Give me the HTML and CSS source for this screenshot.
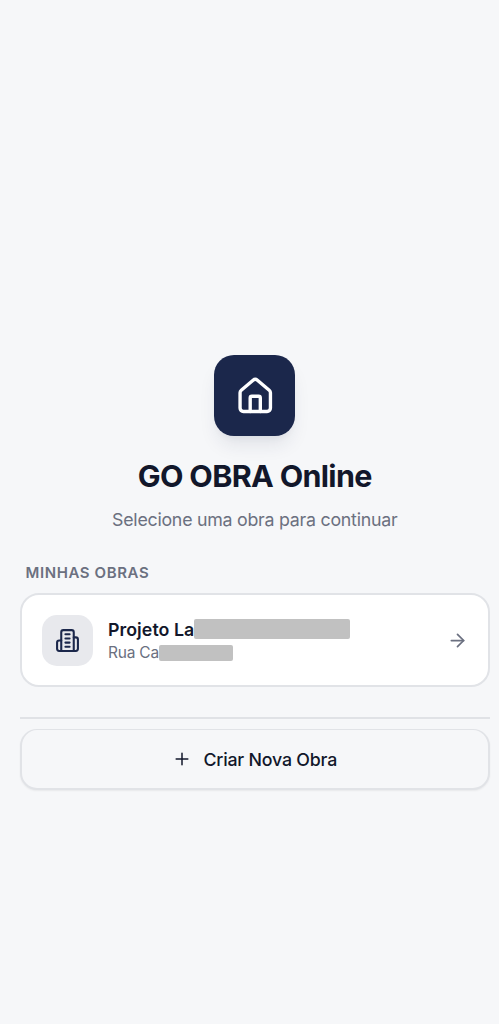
FILE: index.html
```html
<!DOCTYPE html>
<html lang="pt-BR">
<head>
<meta charset="utf-8">
<title>GO OBRA Online</title>
<link rel="stylesheet" href="styles.css">
</head>
<body>
<main class="page">
  <header class="hero">
    <div class="logo">
      <svg class="icon icon-home" viewBox="0 0 24 24"><path d="M15 21v-8a1 1 0 0 0-1-1h-4a1 1 0 0 0-1 1v8"/><path d="M3 10a2 2 0 0 1 .709-1.528l7-5.999a2 2 0 0 1 2.582 0l7 5.999A2 2 0 0 1 21 10v9a2 2 0 0 1-2 2H5a2 2 0 0 1-2-2z"/></svg>
    </div>
    <h1 class="title">GO OBRA Online</h1>
    <p class="subtitle">Selecione uma obra para continuar</p>
  </header>
  <h2 class="section-label">MINHAS OBRAS</h2>
  <a class="card">
    <span class="badge">
      <svg class="icon icon-building" viewBox="0 0 24 24"><path d="M6 22V4a2 2 0 0 1 2-2h8a2 2 0 0 1 2 2v18Z"/><path d="M6 12H4a2 2 0 0 0-2 2v6a2 2 0 0 0 2 2h2"/><path d="M18 9h2a2 2 0 0 1 2 2v9a2 2 0 0 1-2 2h-2"/><path d="M10 6h4M10 10h4M10 14h4M10 18h4"/></svg>
    </span>
    <span class="info">
      <span class="name"><span>Projeto La</span><span class="mask mask-name"></span></span>
      <span class="address"><span>Rua Ca</span><span class="mask mask-address"></span></span>
    </span>
    <svg class="icon icon-arrow" viewBox="0 0 24 24"><path d="M5 12h14"/><path d="m12 5 7 7-7 7"/></svg>
  </a>
  <hr class="divider">
  <button class="create">
    <svg class="icon icon-plus" viewBox="0 0 24 24"><path d="M5 12h14M12 5v14"/></svg>
    <span>Criar Nova Obra</span>
  </button>
</main>
</body>
</html>
```
FILE: styles.css
```css
* { box-sizing: border-box; }
body {
  margin: 0;
  background: #f6f7f9;
  color: #12172b;
  font-family: Inter, "Liberation Sans", sans-serif;
}
.page {
  display: flex;
  flex-direction: column;
  min-height: 1024px;
  padding: 355px 9.5px 0 20px;
}
.icon {
  display: block;
  flex: none;
  fill: none;
  stroke: currentColor;
  stroke-width: 2;
  stroke-linecap: round;
  stroke-linejoin: round;
}
.hero { display: flex; flex-direction: column; align-items: center; }
.logo {
  display: grid;
  place-items: center;
  width: 81px;
  height: 81px;
  padding-top: 2px;
  border-radius: 20px;
  background: #1b274b;
  color: #fff;
  box-shadow: 0 12px 19px -4px rgb(27 39 75 / .1), 0 5px 8px -5px rgb(27 39 75 / .08);
}
.icon-home { width: 40.5px; height: 40.5px; }
.title {
  margin: 19px 0 0;
  font-size: 30.5px;
  line-height: 41px;
  font-weight: 700;
  letter-spacing: -.68px;
}
.subtitle {
  margin: 11px 0 0;
  color: #6b7080;
  font-size: 17.8px;
  line-height: 26px;
  letter-spacing: -.25px;
}
.section-label {
  margin: 30px 0 0 5.5px;
  color: #6b7080;
  font-size: 15px;
  line-height: 20px;
  font-weight: 600;
  letter-spacing: .6px;
}
.card {
  display: flex;
  align-items: center;
  height: 94px;
  margin-top: 10px;
  padding: 0 20px 0 20px;
  border: 2px solid #e1e3e7;
  border-radius: 19px;
  background: #fff;
}
.badge {
  display: grid;
  place-items: center;
  width: 51px;
  height: 51px;
  padding-top: 1px;
  border-radius: 15px;
  background: #e8e9ed;
  color: #1b274b;
}
.icon-building { width: 25px; height: 25px; }
.info { flex: 1; margin-left: 15px; padding-top: 2px; }
.name, .address { display: flex; align-items: center; white-space: nowrap; }
.name { height: 23px; font-size: 17.8px; font-weight: 600; letter-spacing: .05px; }
.address { height: 24px; color: #6b7080; font-size: 15.5px; letter-spacing: -.22px; }
.mask { border-radius: 2px; background: #c1c1c1; }
.mask-name { width: 156px; height: 20px; }
.mask-address { width: 74px; height: 16px; }
.icon-arrow { width: 21px; height: 21px; color: #6b7080; }
.divider { width: 100%; height: 2px; margin: 30px 0 0; border: 0; background: #e0e2e6; }
.create {
  display: flex;
  align-items: center;
  justify-content: center;
  gap: 11px;
  height: 61px;
  margin-top: 10px;
  padding: 0;
  border: 2px solid #e1e3e7;
  border-top-width: 1px;
  border-radius: 17px;
  background: #f6f7f9;
  color: #12172b;
  font: 500 17.8px Inter, "Liberation Sans", sans-serif;
  letter-spacing: -.2px;
  box-shadow: 0 1px 2px rgb(0 0 0 / .06);
}
.icon-plus { width: 20px; height: 20px; stroke-width: 1.8; }
```
